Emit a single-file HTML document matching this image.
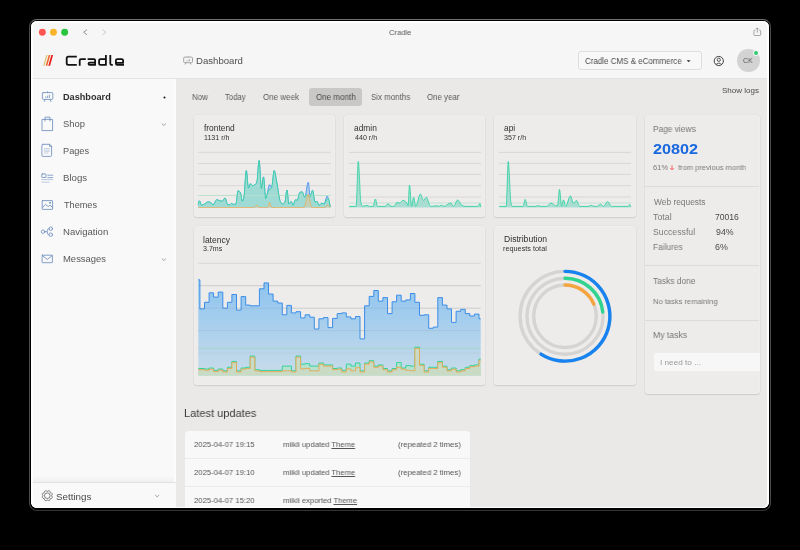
<!DOCTYPE html><html><head><meta charset="utf-8"><style>
html,body{margin:0;padding:0;width:800px;height:550px;overflow:hidden;background:#000;}
*{box-sizing:border-box;}
body{font-family:"Liberation Sans",sans-serif;position:relative;}
.t{position:absolute;line-height:1;white-space:pre;will-change:transform;}
.abs{position:absolute;}
.ring{position:absolute;left:29px;top:19px;width:742px;height:492px;border:1px solid #4a4a4a;border-top-color:#707070;border-bottom-color:#333;border-radius:8px;}
.hl{position:absolute;left:31px;top:21px;width:738px;height:487px;border:2px solid rgba(255,255,255,0.85);border-bottom-width:1.5px;border-radius:6px;}
.win{position:absolute;left:0;top:0;width:800px;height:550px;clip-path:inset(21px 31px 42px 31px round 6px);background:#f6f6f6;}
.card{position:absolute;background:#edeceb;border-radius:3px;box-shadow:0 0 0 0.5px rgba(0,0,0,0.045),0 1px 1.5px rgba(0,0,0,0.1),inset 0 0 0 1px rgba(255,255,255,0.14);}
</style></head><body>
<div class="ring"></div>
<div class="win">
<div class="abs" style="left:31px;top:21px;width:738px;height:58px;background:#f6f6f6"></div><svg class="abs" style="left:0;top:0" width="120" height="50"><circle cx="42.35" cy="32.2" r="3.45" fill="#ff5552"/><circle cx="53.5" cy="32.2" r="3.45" fill="#f8b52c"/><circle cx="64.65" cy="32.2" r="3.45" fill="#2ac441"/></svg><svg class="abs" style="left:0;top:0" width="800" height="80"><polyline points="87,29.6 83.6,32.2 87,34.8" fill="none" stroke="#8a8a8a" stroke-width="0.9"/><polyline points="102.5,29.6 105.9,32.2 102.5,34.8" fill="none" stroke="#c4c4c4" stroke-width="0.9"/><path d="M755.4,30.2 H754.8 Q753.9,30.2 753.9,31.1 V34.6 Q753.9,35.5 754.8,35.5 H759.8 Q760.7,35.5 760.7,34.6 V31.1 Q760.7,30.2 759.8,30.2 H759.2 M757.3,32.6 V27.9 M756,29.2 L757.3,27.9 L758.6,29.2" fill="none" stroke="#8a8a8a" stroke-width="0.75"/></svg><div class="t" style="left:388.51px;top:29px;font-size:8.0px;color:#5a5a5a;font-weight:400;transform:scaleX(0.9565);transform-origin:0 0;">Cradle</div>
<div class="abs" style="left:31px;top:78px;width:738px;height:1px;background:#e3e3e3"></div><svg class="abs" style="left:0;top:0" width="200" height="80"><polygon points="46.3,55 47.5,55 44.5,65.8 43.3,65.8" fill="#d8c46a"/><polygon points="48.7,55 50.3,55 47.3,65.8 45.7,65.8" fill="#f0642a"/><polygon points="51.3,55 53.1,55 50.1,65.8 48.3,65.8" fill="#e8201c"/></svg><svg class="abs" style="left:0;top:0" width="200" height="80"><g fill="none" stroke="#111" stroke-width="1.8" stroke-linejoin="round"><path d="M76.8,56.7 H68.3 Q66.7,56.7 66.7,58.3 V63.3 Q66.7,64.9 68.3,64.9 H76.8"/><path d="M79.7,65.8 V60.5 Q79.7,59.1 81.1,59.1 H85.8"/><path d="M87.6,59.1 H94 Q95.1,59.1 95.1,60.2 V64.9 H89.6 Q88.5,64.9 88.5,63.8 Q88.5,62.7 89.6,62.7 H95.1"/><path d="M105.9,55 V64.9 H100.5 Q99.1,64.9 99.1,63.5 V60.5 Q99.1,59.1 100.5,59.1 H105.9"/><path d="M110.3,55 V63.6 Q110.3,64.9 111.6,64.9 H112.8"/><path d="M124,64.9 H117.3 Q115.9,64.9 115.9,63.5 V60.5 Q115.9,59.1 117.3,59.1 H121.7 Q123.1,59.1 123.1,60.5 V62.9 H115.9"/></g></svg><svg class="abs" style="left:0;top:0" width="260" height="80"><g fill="none" stroke="#8d8d8d" stroke-width="0.8"><rect x="183.7" y="57.1" width="8.8" height="5.6" rx="1"/><path d="M186.1,62.7 l-0.9,1.8 M190.1,62.7 l0.9,1.8 M188.1,57.1 v-0.8 M186.6,61.2 v-0.6 M188.1,61.2 v-1.3 M189.6,61.2 v-2" stroke-width="0.7"/></g></svg><div class="t" style="left:195.75px;top:56px;font-size:9.6px;color:#4f4f4f;font-weight:400;transform:scaleX(0.9945);transform-origin:0 0;">Dashboard</div>
<div class="abs" style="left:578.2px;top:51.2px;width:123.4px;height:18.4px;border:1px solid #dedede;border-radius:3px;background:#f8f8f8"></div><div class="t" style="left:585.29px;top:57px;font-size:8.7px;color:#4a4a4a;font-weight:400;transform:scaleX(0.9187);transform-origin:0 0;">Cradle CMS &amp; eCommerce</div>
<svg class="abs" style="left:0;top:0" width="800" height="80"><polygon points="686.6,60.2 690.6,60.2 688.6,62.2" fill="#333"/><circle cx="718.8" cy="61" r="4.6" fill="none" stroke="#333" stroke-width="0.9"/><circle cx="718.8" cy="59.8" r="1.6" fill="none" stroke="#333" stroke-width="0.8"/><path d="M715.9,64.4 Q718.8,61.6 721.7,64.4" fill="none" stroke="#333" stroke-width="0.8"/></svg><div class="abs" style="left:737px;top:49.2px;width:22.6px;height:22.6px;border-radius:50%;background:#d3d3d3"></div><div class="t" style="left:743.07px;top:57px;font-size:7.5px;color:#555;font-weight:400;transform:scaleX(0.9200);transform-origin:0 0;">CK</div>
<div class="abs" style="left:754.2px;top:50.7px;width:4px;height:4px;border-radius:50%;background:#2ecc71;box-shadow:0 0 0 1px #f6f6f6"></div><div class="abs" style="left:31px;top:79px;width:145px;height:430px;background:#f9f9f9"></div><div class="abs" style="left:31px;top:476px;width:145px;height:6px;background:linear-gradient(#f9f9f9,#f0f0f0)"></div><div class="abs" style="left:174px;top:79px;width:2px;height:403px;background:#fcfcfc"></div><div class="abs" style="left:31px;top:482px;width:145px;height:1px;background:#e2e2e2"></div><div class="t" style="left:63.39px;top:93px;font-size:9.0px;color:#2e2e2e;font-weight:700;transform:scaleX(1.0152);transform-origin:0 0;">Dashboard</div>
<div class="t" style="left:63.28px;top:120px;font-size:9.15px;color:#585858;font-weight:400;transform:scaleX(1.0341);transform-origin:0 0;">Shop</div>
<div class="t" style="left:63.04px;top:147px;font-size:9.15px;color:#585858;font-weight:400;transform:scaleX(1.0080);transform-origin:0 0;">Pages</div>
<div class="t" style="left:63.01px;top:174px;font-size:9.15px;color:#585858;font-weight:400;transform:scaleX(1.0575);transform-origin:0 0;">Blogs</div>
<div class="t" style="left:64.05px;top:201px;font-size:9.15px;color:#585858;font-weight:400;">Themes</div>
<div class="t" style="left:63.01px;top:228px;font-size:9.15px;color:#585858;font-weight:400;transform:scaleX(1.0500);transform-origin:0 0;">Navigation</div>
<div class="t" style="left:63.02px;top:255px;font-size:9.15px;color:#585858;font-weight:400;transform:scaleX(1.0356);transform-origin:0 0;">Messages</div>
<svg class="abs" style="left:0;top:0" width="180" height="520"><g fill="none" stroke="#6f8fbf" stroke-width="0.85" stroke-linejoin="round" stroke-linecap="round"><rect x="42.4" y="92.6" width="10.4" height="6.8" rx="0.8"/><path d="M47.6,92.6 v-1 M45.2,99.4 l-1,2.2 M50,99.4 l1,2.2 M45.8,97.6 v-0.8 M47.6,97.6 v-1.6 M49.4,97.6 v-2.4" stroke-width="0.8"/><path d="M42.4,119.4 H52.6 V130.6 H42.4 Z M45,119.4 V117.2 H50 V119.4 M45,119.4 V121 M50,119.4 V121"/><path d="M42.9,144.3 H49.6 L51.6,146.3 V155.4 Q51.6,156.4 50.6,156.4 H42.9 Q41.9,156.4 41.9,155.4 V145.3 Q41.9,144.3 42.9,144.3 Z M49.6,144.3 V146.3 H51.6"/><path d="M44.4,148.6 H49.4 M44.4,150.1 H49.4 M44.4,151.6 H49.4 M44.4,153.1 H47.8" stroke-width="0.5" opacity="0.7"/><rect x="41.8" y="173.9" width="4.2" height="3.6" rx="0.5"/><path d="M47.8,175.2 H52.8 M47.8,177.6 H52.8" stroke-width="0.8"/><path d="M41.8,179.6 H52.8 M41.8,182.2 H49" stroke-width="0.6" opacity="0.75"/><rect x="42.2" y="200.6" width="10.4" height="8.8" rx="0.4"/><path d="M42.4,207.4 L45.6,204.4 L48.2,206.6 L50,205.2 L52.4,207.2"/><circle cx="50" cy="202.8" r="0.6"/><circle cx="43.1" cy="231.7" r="1.75"/><circle cx="50.8" cy="228.7" r="1.75"/><circle cx="50.8" cy="234.7" r="1.75"/><path d="M44.85,231.7 H46.6 Q47.6,231.7 47.6,230.7 V229.7 Q47.6,228.7 48.6,228.7 H49.05 M46.6,231.7 Q47.6,231.7 47.6,232.7 V233.7 Q47.6,234.7 48.6,234.7 H49.05"/><rect x="42.1" y="255.2" width="10.3" height="7.5" rx="0.4"/><path d="M42.3,255.6 L47.25,259.4 L52.2,255.6"/></g><circle cx="164.5" cy="97.6" r="1" fill="#111"/><g fill="none" stroke="#8a8a8a" stroke-width="0.8"><polyline points="161.8,123.6 163.8,125.5 165.8,123.6"/><polyline points="161.8,258.6 163.8,260.5 165.8,258.6"/><polyline points="155.2,495 157.2,496.9 159.2,495"/></g><g fill="none" stroke="#5e5e5e" stroke-width="0.8"><circle cx="47.3" cy="495.7" r="2.8"/><path d="M47.30,491.40 Q49.83,489.60 50.34,492.66 Q53.40,493.17 51.60,495.70 Q53.40,498.23 50.34,498.74 Q49.83,501.80 47.30,500.00 Q44.77,501.80 44.26,498.74 Q41.20,498.23 43.00,495.70 Q41.20,493.17 44.26,492.66 Q44.77,489.60 47.30,491.40 Z"/></g></svg><div class="t" style="left:56.25px;top:492px;font-size:9.8px;color:#4a4a4a;font-weight:400;">Settings</div>
<div class="abs" style="left:176px;top:79px;width:593px;height:430px;background:#ebe9e8"></div><div class="abs" style="left:308.5px;top:87.8px;width:53.5px;height:17.9px;border-radius:3px;background:#c9c8c7"></div><div class="t" style="left:191.66px;top:93px;font-size:8.7px;color:#5a5a5a;font-weight:400;transform:scaleX(0.9134);transform-origin:0 0;">Now</div>
<div class="t" style="left:225.18px;top:93px;font-size:8.7px;color:#5a5a5a;font-weight:400;transform:scaleX(0.8870);transform-origin:0 0;">Today</div>
<div class="t" style="left:262.77px;top:93px;font-size:8.7px;color:#5a5a5a;font-weight:400;transform:scaleX(0.9231);transform-origin:0 0;">One week</div>
<div class="t" style="left:315.77px;top:93px;font-size:8.7px;color:#4a4a4a;font-weight:400;transform:scaleX(0.9231);transform-origin:0 0;">One month</div>
<div class="t" style="left:371.24px;top:93px;font-size:8.7px;color:#5a5a5a;font-weight:400;transform:scaleX(0.9112);transform-origin:0 0;">Six months</div>
<div class="t" style="left:427.47px;top:93px;font-size:8.7px;color:#5a5a5a;font-weight:400;transform:scaleX(0.9099);transform-origin:0 0;">One year</div>
<div class="t" style="left:722.20px;top:87px;font-size:8.0px;color:#4a4a4a;font-weight:400;transform:scaleX(0.9931);transform-origin:0 0;">Show logs</div>
<div class="card" style="left:193.5px;top:114.5px;width:141.9px;height:102.5px"></div><div class="card" style="left:343.5px;top:114.5px;width:141.5px;height:102.5px"></div><div class="card" style="left:494px;top:114.5px;width:141.5px;height:102.5px"></div><div class="card" style="left:644.5px;top:114.5px;width:115px;height:279.2px"></div><div class="card" style="left:193.5px;top:226px;width:291.5px;height:159.4px"></div><div class="card" style="left:494px;top:226px;width:141.5px;height:159.2px"></div><div class="t" style="left:204.00px;top:124px;font-size:8.4px;color:#303030;font-weight:400;">frontend</div>
<div class="t" style="left:204.00px;top:135px;font-size:7.1px;color:#333;font-weight:400;">1131 r/h</div>
<div class="t" style="left:354.15px;top:124px;font-size:8.4px;color:#303030;font-weight:400;">admin</div>
<div class="t" style="left:354.90px;top:135px;font-size:7.1px;color:#333;font-weight:400;">440 r/h</div>
<div class="t" style="left:503.75px;top:124px;font-size:8.4px;color:#303030;font-weight:400;">api</div>
<div class="t" style="left:504.25px;top:135px;font-size:7.1px;color:#333;font-weight:400;">357 r/h</div>
<svg class="abs" style="left:0;top:0" width="800" height="550">
<defs><linearGradient id="lg" x1="0" y1="0" x2="0" y2="1"><stop offset="0" stop-color="#8cc3ef"/><stop offset="1" stop-color="#c8dcea"/></linearGradient></defs>
<line x1="198.3" y1="152.3" x2="330.7" y2="152.3" stroke="#d6d5d4" stroke-width="0.9"/>
<line x1="198.3" y1="163.5" x2="330.7" y2="163.5" stroke="#d6d5d4" stroke-width="0.9"/>
<line x1="198.3" y1="174.4" x2="330.7" y2="174.4" stroke="#d6d5d4" stroke-width="0.9"/>
<line x1="198.3" y1="185.6" x2="330.7" y2="185.6" stroke="#d6d5d4" stroke-width="0.9"/>
<line x1="349" y1="152.4" x2="481" y2="152.4" stroke="#d6d5d4" stroke-width="0.9"/>
<line x1="349" y1="163.4" x2="481" y2="163.4" stroke="#d6d5d4" stroke-width="0.9"/>
<line x1="349" y1="174.4" x2="481" y2="174.4" stroke="#d6d5d4" stroke-width="0.9"/>
<line x1="349" y1="185.6" x2="481" y2="185.6" stroke="#d6d5d4" stroke-width="0.9"/>
<line x1="349" y1="197" x2="481" y2="197" stroke="#d6d5d4" stroke-width="0.9"/>
<line x1="499" y1="152.4" x2="631" y2="152.4" stroke="#d6d5d4" stroke-width="0.9"/>
<line x1="499" y1="163.4" x2="631" y2="163.4" stroke="#d6d5d4" stroke-width="0.9"/>
<line x1="499" y1="174.4" x2="631" y2="174.4" stroke="#d6d5d4" stroke-width="0.9"/>
<line x1="499" y1="185.6" x2="631" y2="185.6" stroke="#d6d5d4" stroke-width="0.9"/>
<line x1="499" y1="197" x2="631" y2="197" stroke="#d6d5d4" stroke-width="0.9"/>
<path d="M198.20,204.70 C198.60,203.40 199.00,200.80 199.40,200.80 C200.10,200.80 200.80,205.30 201.50,205.30 C202.50,205.30 203.50,204.49 204.50,204.00 C205.73,203.39 206.97,201.90 208.20,201.90 C209.20,201.90 210.20,202.23 211.20,202.90 C211.80,203.30 212.40,205.00 213.00,205.00 C214.23,205.00 215.47,199.80 216.70,199.80 C217.73,199.80 218.77,200.53 219.80,200.80 C220.60,201.01 221.40,201.30 222.20,201.30 C223.13,201.30 224.07,198.00 225.00,198.00 C225.90,198.00 226.80,204.40 227.70,204.70 C228.30,204.90 228.90,205.00 229.50,205.00 C230.10,205.00 230.70,203.50 231.30,203.50 C231.90,203.50 232.50,204.40 233.10,204.40 C234.07,204.40 235.03,204.27 236.00,204.00 C236.67,203.82 237.33,190.70 238.00,190.70 C238.83,190.70 239.67,191.50 240.50,193.10 C241.10,194.25 241.70,201.30 242.30,201.30 C242.90,201.30 243.50,199.60 244.10,196.20 C244.83,192.04 245.57,170.60 246.30,170.60 C247.00,170.60 247.70,188.20 248.40,188.20 C249.13,188.20 249.87,183.70 250.60,183.70 C251.27,183.70 251.93,185.80 252.60,185.80 C253.63,185.80 254.67,185.20 255.70,184.00 C256.10,183.54 256.50,183.40 256.90,182.20 C257.63,180.00 258.37,160.60 259.10,160.60 C259.87,160.60 260.63,188.80 261.40,188.80 C262.10,188.80 262.80,176.90 263.50,176.90 C264.23,176.90 264.97,198.60 265.70,198.60 C267.00,198.60 268.30,184.60 269.60,184.60 C270.30,184.60 271.00,187.60 271.70,187.60 C272.53,187.60 273.37,170.60 274.20,170.60 C275.00,170.60 275.80,177.59 276.60,181.50 C277.83,187.53 279.07,199.13 280.30,201.60 C281.10,203.20 281.90,204.00 282.70,204.00 C283.43,204.00 284.17,203.40 284.90,202.20 C285.60,201.05 286.30,190.00 287.00,190.00 C287.60,190.00 288.20,204.00 288.80,204.00 C289.60,204.00 290.40,201.60 291.20,201.60 C291.83,201.60 292.47,205.30 293.10,205.30 C293.90,205.30 294.70,199.80 295.50,199.80 C296.10,199.80 296.70,200.40 297.30,200.40 C298.13,200.40 298.97,192.92 299.80,192.50 C300.60,192.10 301.40,191.90 302.20,191.90 C303.00,191.90 303.80,197.40 304.60,197.40 C305.83,197.40 307.07,182.20 308.30,182.20 C308.90,182.20 309.50,196.80 310.10,196.80 C310.90,196.80 311.70,190.30 312.50,190.30 C313.33,190.30 314.17,202.20 315.00,202.20 C315.60,202.20 316.20,201.30 316.80,201.30 C317.60,201.30 318.40,205.30 319.20,205.30 C320.03,205.30 320.87,203.20 321.70,203.20 C322.50,203.20 323.30,204.00 324.10,204.00 C325.13,204.00 326.17,196.00 327.20,196.00 C327.60,196.00 328.00,197.33 328.40,198.60 C329.00,200.50 329.60,204.20 330.20,207.00 L330.20,207.6 L198.20,207.6 Z" fill="#a9cfe6" opacity="0.9"/>
<path d="M198.20,204.70 C198.60,203.40 199.00,200.80 199.40,200.80 C200.10,200.80 200.80,205.30 201.50,205.30 C202.50,205.30 203.50,204.49 204.50,204.00 C205.73,203.39 206.97,201.90 208.20,201.90 C209.20,201.90 210.20,202.23 211.20,202.90 C211.80,203.30 212.40,205.00 213.00,205.00 C214.23,205.00 215.47,199.80 216.70,199.80 C217.73,199.80 218.77,200.53 219.80,200.80 C220.60,201.01 221.40,201.30 222.20,201.30 C223.13,201.30 224.07,198.00 225.00,198.00 C225.90,198.00 226.80,204.40 227.70,204.70 C228.30,204.90 228.90,205.00 229.50,205.00 C230.10,205.00 230.70,203.50 231.30,203.50 C231.90,203.50 232.50,204.40 233.10,204.40 C234.07,204.40 235.03,204.27 236.00,204.00 C236.67,203.82 237.33,190.70 238.00,190.70 C238.83,190.70 239.67,191.50 240.50,193.10 C241.10,194.25 241.70,201.30 242.30,201.30 C242.90,201.30 243.50,199.60 244.10,196.20 C244.83,192.04 245.57,170.60 246.30,170.60 C247.00,170.60 247.70,188.20 248.40,188.20 C249.13,188.20 249.87,183.70 250.60,183.70 C251.27,183.70 251.93,185.80 252.60,185.80 C253.63,185.80 254.67,185.20 255.70,184.00 C256.10,183.54 256.50,183.40 256.90,182.20 C257.63,180.00 258.37,160.60 259.10,160.60 C259.87,160.60 260.63,188.80 261.40,188.80 C262.10,188.80 262.80,176.90 263.50,176.90 C264.23,176.90 264.97,198.60 265.70,198.60 C267.00,198.60 268.30,184.60 269.60,184.60 C270.30,184.60 271.00,187.60 271.70,187.60 C272.53,187.60 273.37,170.60 274.20,170.60 C275.00,170.60 275.80,177.59 276.60,181.50 C277.83,187.53 279.07,199.13 280.30,201.60 C281.10,203.20 281.90,204.00 282.70,204.00 C283.43,204.00 284.17,203.40 284.90,202.20 C285.60,201.05 286.30,190.00 287.00,190.00 C287.60,190.00 288.20,204.00 288.80,204.00 C289.60,204.00 290.40,201.60 291.20,201.60 C291.83,201.60 292.47,205.30 293.10,205.30 C293.90,205.30 294.70,199.80 295.50,199.80 C296.10,199.80 296.70,200.40 297.30,200.40 C298.13,200.40 298.97,192.92 299.80,192.50 C300.60,192.10 301.40,191.90 302.20,191.90 C303.00,191.90 303.80,197.40 304.60,197.40 C305.83,197.40 307.07,182.20 308.30,182.20 C308.90,182.20 309.50,196.80 310.10,196.80 C310.90,196.80 311.70,190.30 312.50,190.30 C313.33,190.30 314.17,202.20 315.00,202.20 C315.60,202.20 316.20,201.30 316.80,201.30 C317.60,201.30 318.40,205.30 319.20,205.30 C320.03,205.30 320.87,203.20 321.70,203.20 C322.50,203.20 323.30,204.00 324.10,204.00 C325.13,204.00 326.17,196.00 327.20,196.00 C327.60,196.00 328.00,197.33 328.40,198.60 C329.00,200.50 329.60,204.20 330.20,207.00" fill="none" stroke="#4a8ef0" stroke-width="0.9"/>
<path d="M198.20,204.70 C198.60,203.40 199.00,200.80 199.40,200.80 C200.10,200.80 200.80,205.30 201.50,205.30 C202.50,205.30 203.50,204.49 204.50,204.00 C205.73,203.39 206.97,201.90 208.20,201.90 C209.20,201.90 210.20,202.23 211.20,202.90 C211.80,203.30 212.40,205.00 213.00,205.00 C214.23,205.00 215.47,199.80 216.70,199.80 C217.73,199.80 218.77,200.53 219.80,200.80 C220.60,201.01 221.40,201.30 222.20,201.30 C223.13,201.30 224.07,198.00 225.00,198.00 C225.90,198.00 226.80,204.40 227.70,204.70 C228.30,204.90 228.90,205.00 229.50,205.00 C230.10,205.00 230.70,203.50 231.30,203.50 C231.90,203.50 232.50,204.40 233.10,204.40 C234.07,204.40 235.03,204.27 236.00,204.00 C236.67,203.82 237.33,190.70 238.00,190.70 C238.83,190.70 239.67,191.50 240.50,193.10 C241.10,194.25 241.70,201.30 242.30,201.30 C242.90,201.30 243.50,199.60 244.10,196.20 C244.83,192.04 245.57,170.60 246.30,170.60 C247.00,170.60 247.70,188.20 248.40,188.20 C249.13,188.20 249.87,183.70 250.60,183.70 C251.27,183.70 251.93,185.80 252.60,185.80 C253.63,185.80 254.67,185.20 255.70,184.00 C256.10,183.54 256.50,183.40 256.90,182.20 C257.63,180.00 258.37,160.60 259.10,160.60 C259.87,160.60 260.63,188.80 261.40,188.80 C262.10,188.80 262.80,176.90 263.50,176.90 C264.23,176.90 264.97,198.60 265.70,198.60 C266.50,198.60 267.30,192.94 268.10,191.30 C269.30,188.83 270.50,190.07 271.70,187.60 C272.53,185.89 273.37,170.60 274.20,170.60 C275.00,170.60 275.80,177.59 276.60,181.50 C277.83,187.53 279.07,199.13 280.30,201.60 C281.10,203.20 281.90,204.00 282.70,204.00 C283.43,204.00 284.17,203.40 284.90,202.20 C285.60,201.05 286.30,190.00 287.00,190.00 C287.60,190.00 288.20,204.00 288.80,204.00 C289.60,204.00 290.40,201.60 291.20,201.60 C291.83,201.60 292.47,205.30 293.10,205.30 C293.90,205.30 294.70,199.80 295.50,199.80 C296.10,199.80 296.70,200.40 297.30,200.40 C298.13,200.40 298.97,192.92 299.80,192.50 C300.60,192.10 301.40,191.90 302.20,191.90 C303.00,191.90 303.80,197.40 304.60,197.40 C305.23,197.40 305.87,195.00 306.50,195.00 C307.70,195.00 308.90,196.80 310.10,196.80 C310.90,196.80 311.70,190.30 312.50,190.30 C313.33,190.30 314.17,202.20 315.00,202.20 C315.60,202.20 316.20,201.30 316.80,201.30 C317.60,201.30 318.40,205.30 319.20,205.30 C320.03,205.30 320.87,203.20 321.70,203.20 C322.50,203.20 323.30,204.00 324.10,204.00 C324.93,204.00 325.77,200.71 326.60,199.80 C327.20,199.15 327.80,198.60 328.40,198.60 C329.00,198.60 329.60,204.20 330.20,207.00 L330.20,207.6 L198.20,207.6 Z" fill="#9fdad5"/>
<line x1="198.3" y1="195.5" x2="330.7" y2="195.5" stroke="#b5e0c8" stroke-width="0.9"/>
<path d="M198.20,204.70 C198.60,203.40 199.00,200.80 199.40,200.80 C200.10,200.80 200.80,205.30 201.50,205.30 C202.50,205.30 203.50,204.49 204.50,204.00 C205.73,203.39 206.97,201.90 208.20,201.90 C209.20,201.90 210.20,202.23 211.20,202.90 C211.80,203.30 212.40,205.00 213.00,205.00 C214.23,205.00 215.47,199.80 216.70,199.80 C217.73,199.80 218.77,200.53 219.80,200.80 C220.60,201.01 221.40,201.30 222.20,201.30 C223.13,201.30 224.07,198.00 225.00,198.00 C225.90,198.00 226.80,204.40 227.70,204.70 C228.30,204.90 228.90,205.00 229.50,205.00 C230.10,205.00 230.70,203.50 231.30,203.50 C231.90,203.50 232.50,204.40 233.10,204.40 C234.07,204.40 235.03,204.27 236.00,204.00 C236.67,203.82 237.33,190.70 238.00,190.70 C238.83,190.70 239.67,191.50 240.50,193.10 C241.10,194.25 241.70,201.30 242.30,201.30 C242.90,201.30 243.50,199.60 244.10,196.20 C244.83,192.04 245.57,170.60 246.30,170.60 C247.00,170.60 247.70,188.20 248.40,188.20 C249.13,188.20 249.87,183.70 250.60,183.70 C251.27,183.70 251.93,185.80 252.60,185.80 C253.63,185.80 254.67,185.20 255.70,184.00 C256.10,183.54 256.50,183.40 256.90,182.20 C257.63,180.00 258.37,160.60 259.10,160.60 C259.87,160.60 260.63,188.80 261.40,188.80 C262.10,188.80 262.80,176.90 263.50,176.90 C264.23,176.90 264.97,198.60 265.70,198.60 C266.50,198.60 267.30,192.94 268.10,191.30 C269.30,188.83 270.50,190.07 271.70,187.60 C272.53,185.89 273.37,170.60 274.20,170.60 C275.00,170.60 275.80,177.59 276.60,181.50 C277.83,187.53 279.07,199.13 280.30,201.60 C281.10,203.20 281.90,204.00 282.70,204.00 C283.43,204.00 284.17,203.40 284.90,202.20 C285.60,201.05 286.30,190.00 287.00,190.00 C287.60,190.00 288.20,204.00 288.80,204.00 C289.60,204.00 290.40,201.60 291.20,201.60 C291.83,201.60 292.47,205.30 293.10,205.30 C293.90,205.30 294.70,199.80 295.50,199.80 C296.10,199.80 296.70,200.40 297.30,200.40 C298.13,200.40 298.97,192.92 299.80,192.50 C300.60,192.10 301.40,191.90 302.20,191.90 C303.00,191.90 303.80,197.40 304.60,197.40 C305.23,197.40 305.87,195.00 306.50,195.00 C307.70,195.00 308.90,196.80 310.10,196.80 C310.90,196.80 311.70,190.30 312.50,190.30 C313.33,190.30 314.17,202.20 315.00,202.20 C315.60,202.20 316.20,201.30 316.80,201.30 C317.60,201.30 318.40,205.30 319.20,205.30 C320.03,205.30 320.87,203.20 321.70,203.20 C322.50,203.20 323.30,204.00 324.10,204.00 C324.93,204.00 325.77,200.71 326.60,199.80 C327.20,199.15 327.80,198.60 328.40,198.60 C329.00,198.60 329.60,204.20 330.20,207.00" fill="none" stroke="#33d2a1" stroke-width="0.9"/>
<path d="M198.20,207.50 C216.80,207.50 235.40,207.50 254.00,207.50 C254.97,207.50 255.93,205.00 256.90,205.00 C257.43,205.00 257.97,207.50 258.50,207.50 C261.50,207.50 264.50,207.50 267.50,207.50 C268.20,207.50 268.90,202.20 269.60,202.20 C270.23,202.20 270.87,207.50 271.50,207.50 C282.33,207.50 293.17,207.50 304.00,207.50 C305.43,207.50 306.87,194.30 308.30,194.30 C309.37,194.30 310.43,207.50 311.50,207.50 C316.00,207.50 320.50,207.50 325.00,207.50 C325.93,207.50 326.87,204.70 327.80,204.70 C328.60,204.70 329.40,206.57 330.20,207.50 L330.20,207.6 L198.20,207.6 Z" fill="#e8c99a" fill-opacity="0.5" stroke="none"/>
<path d="M198.20,207.50 C216.80,207.50 235.40,207.50 254.00,207.50 C254.97,207.50 255.93,205.00 256.90,205.00 C257.43,205.00 257.97,207.50 258.50,207.50 C261.50,207.50 264.50,207.50 267.50,207.50 C268.20,207.50 268.90,202.20 269.60,202.20 C270.23,202.20 270.87,207.50 271.50,207.50 C282.33,207.50 293.17,207.50 304.00,207.50 C305.43,207.50 306.87,194.30 308.30,194.30 C309.37,194.30 310.43,207.50 311.50,207.50 C316.00,207.50 320.50,207.50 325.00,207.50 C325.93,207.50 326.87,204.70 327.80,204.70 C328.60,204.70 329.40,206.57 330.20,207.50" fill="none" stroke="#f2a54a" stroke-width="0.9" opacity="0.75"/>
<path d="M349.15,206.40 C351.48,206.40 353.82,206.40 356.15,206.40 C356.85,206.40 357.55,161.40 358.25,161.40 C359.13,161.40 360.02,198.45 360.90,202.50 C361.47,205.10 362.03,206.40 362.60,206.40 C363.95,206.40 365.30,205.30 366.65,205.30 C367.63,205.30 368.62,206.40 369.60,206.40 C370.77,206.40 371.93,206.40 373.10,206.40 C373.87,206.40 374.63,199.00 375.40,199.00 C376.10,199.00 376.80,206.40 377.50,206.40 C380.13,206.40 382.77,206.40 385.40,206.40 C386.27,206.40 387.13,203.70 388.00,203.70 C388.87,203.70 389.73,205.80 390.60,206.00 C391.77,206.27 392.93,206.40 394.10,206.40 C394.98,206.40 395.87,202.50 396.75,202.50 C397.63,202.50 398.52,203.00 399.40,203.00 C400.57,203.00 401.73,200.40 402.90,200.40 C404.07,200.40 405.23,201.00 406.40,202.20 C406.97,202.78 407.53,205.70 408.10,205.70 C408.57,205.70 409.03,185.00 409.50,185.00 C410.20,185.00 410.90,206.40 411.60,206.40 C412.30,206.40 413.00,197.25 413.70,197.25 C414.35,197.25 415.00,206.40 415.65,206.40 C417.23,206.40 418.82,194.10 420.40,194.10 C421.43,194.10 422.47,200.40 423.50,200.40 C424.50,200.40 425.50,197.25 426.50,197.25 C427.55,197.25 428.60,203.80 429.65,205.10 C430.35,205.97 431.05,206.40 431.75,206.40 C433.50,206.40 435.25,205.70 437.00,205.70 C437.58,205.70 438.17,206.40 438.75,206.40 C439.63,206.40 440.52,205.10 441.40,205.10 C442.27,205.10 443.13,206.40 444.00,206.40 C446.22,206.40 448.43,203.00 450.65,203.00 C451.63,203.00 452.62,206.40 453.60,206.40 C454.95,206.40 456.30,199.90 457.65,199.90 C458.93,199.90 460.22,204.34 461.50,205.10 C462.97,205.97 464.43,206.40 465.90,206.40 C469.97,206.40 474.03,206.40 478.10,206.40 C478.70,206.40 479.30,203.40 479.90,203.40 C480.18,203.40 480.47,205.73 480.75,206.90 L480.75,207.6 L349.15,207.6 Z" fill="#a9ddd4"/>
<line x1="349.15" y1="203" x2="480.75" y2="203" stroke="#a8dcc4" stroke-width="0.6"/>
<path d="M349.15,206.40 C351.48,206.40 353.82,206.40 356.15,206.40 C356.85,206.40 357.55,161.40 358.25,161.40 C359.13,161.40 360.02,198.45 360.90,202.50 C361.47,205.10 362.03,206.40 362.60,206.40 C363.95,206.40 365.30,205.30 366.65,205.30 C367.63,205.30 368.62,206.40 369.60,206.40 C370.77,206.40 371.93,206.40 373.10,206.40 C373.87,206.40 374.63,199.00 375.40,199.00 C376.10,199.00 376.80,206.40 377.50,206.40 C380.13,206.40 382.77,206.40 385.40,206.40 C386.27,206.40 387.13,203.70 388.00,203.70 C388.87,203.70 389.73,205.80 390.60,206.00 C391.77,206.27 392.93,206.40 394.10,206.40 C394.98,206.40 395.87,202.50 396.75,202.50 C397.63,202.50 398.52,203.00 399.40,203.00 C400.57,203.00 401.73,200.40 402.90,200.40 C404.07,200.40 405.23,201.00 406.40,202.20 C406.97,202.78 407.53,205.70 408.10,205.70 C408.57,205.70 409.03,185.00 409.50,185.00 C410.20,185.00 410.90,206.40 411.60,206.40 C412.30,206.40 413.00,197.25 413.70,197.25 C414.35,197.25 415.00,206.40 415.65,206.40 C417.23,206.40 418.82,194.10 420.40,194.10 C421.43,194.10 422.47,200.40 423.50,200.40 C424.50,200.40 425.50,197.25 426.50,197.25 C427.55,197.25 428.60,203.80 429.65,205.10 C430.35,205.97 431.05,206.40 431.75,206.40 C433.50,206.40 435.25,205.70 437.00,205.70 C437.58,205.70 438.17,206.40 438.75,206.40 C439.63,206.40 440.52,205.10 441.40,205.10 C442.27,205.10 443.13,206.40 444.00,206.40 C446.22,206.40 448.43,203.00 450.65,203.00 C451.63,203.00 452.62,206.40 453.60,206.40 C454.95,206.40 456.30,199.90 457.65,199.90 C458.93,199.90 460.22,204.34 461.50,205.10 C462.97,205.97 464.43,206.40 465.90,206.40 C469.97,206.40 474.03,206.40 478.10,206.40 C478.70,206.40 479.30,203.40 479.90,203.40 C480.18,203.40 480.47,205.73 480.75,206.90" fill="none" stroke="#33d2a1" stroke-width="0.9"/>
<path d="M499.20,206.40 C501.53,206.40 503.87,206.40 506.20,206.40 C506.88,206.40 507.57,161.40 508.25,161.40 C509.13,161.40 510.02,198.45 510.90,202.50 C511.47,205.10 512.03,206.40 512.60,206.40 C516.10,206.40 519.60,206.40 523.10,206.40 C523.80,206.40 524.50,199.40 525.20,199.40 C525.97,199.40 526.73,206.40 527.50,206.40 C530.00,206.40 532.50,206.40 535.00,206.40 C536.00,206.40 537.00,205.70 538.00,205.70 C539.00,205.70 540.00,206.40 541.00,206.40 C542.92,206.40 544.83,206.40 546.75,206.40 C548.20,206.40 549.65,203.00 551.10,203.00 C552.57,203.00 554.03,205.70 555.50,205.70 C556.20,205.70 556.90,205.70 557.60,205.70 C558.23,205.70 558.87,189.40 559.50,189.40 C560.20,189.40 560.90,206.40 561.60,206.40 C562.25,206.40 562.90,199.90 563.55,199.90 C564.25,199.90 564.95,206.40 565.65,206.40 C567.23,206.40 568.82,195.85 570.40,195.85 C571.43,195.85 572.47,203.40 573.50,203.40 C574.50,203.40 575.50,200.40 576.50,200.40 C577.55,200.40 578.60,206.40 579.65,206.40 C582.43,206.40 585.22,206.40 588.00,206.40 C589.13,206.40 590.27,205.30 591.40,205.30 C592.27,205.30 593.13,206.40 594.00,206.40 C594.87,206.40 595.73,206.40 596.60,206.40 C597.97,206.40 599.33,204.30 600.70,204.30 C601.67,204.30 602.63,206.40 603.60,206.40 C604.95,206.40 606.30,201.60 607.65,201.60 C608.93,201.60 610.22,206.40 611.50,206.40 C617.03,206.40 622.57,206.40 628.10,206.40 C628.70,206.40 629.30,204.50 629.90,204.50 C630.18,204.50 630.47,206.10 630.75,206.90 L630.75,207.6 L499.20,207.6 Z" fill="#a9ddd4"/>
<line x1="499.2" y1="203" x2="630.75" y2="203" stroke="#a8dcc4" stroke-width="0.6"/>
<path d="M499.20,206.40 C501.53,206.40 503.87,206.40 506.20,206.40 C506.88,206.40 507.57,161.40 508.25,161.40 C509.13,161.40 510.02,198.45 510.90,202.50 C511.47,205.10 512.03,206.40 512.60,206.40 C516.10,206.40 519.60,206.40 523.10,206.40 C523.80,206.40 524.50,199.40 525.20,199.40 C525.97,199.40 526.73,206.40 527.50,206.40 C530.00,206.40 532.50,206.40 535.00,206.40 C536.00,206.40 537.00,205.70 538.00,205.70 C539.00,205.70 540.00,206.40 541.00,206.40 C542.92,206.40 544.83,206.40 546.75,206.40 C548.20,206.40 549.65,203.00 551.10,203.00 C552.57,203.00 554.03,205.70 555.50,205.70 C556.20,205.70 556.90,205.70 557.60,205.70 C558.23,205.70 558.87,189.40 559.50,189.40 C560.20,189.40 560.90,206.40 561.60,206.40 C562.25,206.40 562.90,199.90 563.55,199.90 C564.25,199.90 564.95,206.40 565.65,206.40 C567.23,206.40 568.82,195.85 570.40,195.85 C571.43,195.85 572.47,203.40 573.50,203.40 C574.50,203.40 575.50,200.40 576.50,200.40 C577.55,200.40 578.60,206.40 579.65,206.40 C582.43,206.40 585.22,206.40 588.00,206.40 C589.13,206.40 590.27,205.30 591.40,205.30 C592.27,205.30 593.13,206.40 594.00,206.40 C594.87,206.40 595.73,206.40 596.60,206.40 C597.97,206.40 599.33,204.30 600.70,204.30 C601.67,204.30 602.63,206.40 603.60,206.40 C604.95,206.40 606.30,201.60 607.65,201.60 C608.93,201.60 610.22,206.40 611.50,206.40 C617.03,206.40 622.57,206.40 628.10,206.40 C628.70,206.40 629.30,204.50 629.90,204.50 C630.18,204.50 630.47,206.10 630.75,206.90" fill="none" stroke="#33d2a1" stroke-width="0.9"/>
<line x1="198.3" y1="263.3" x2="480.7" y2="263.3" stroke="#d6d5d4" stroke-width="0.9"/>
<line x1="198.3" y1="285.7" x2="480.7" y2="285.7" stroke="#d6d5d4" stroke-width="0.9"/>
<line x1="198.3" y1="308.2" x2="480.7" y2="308.2" stroke="#d6d5d4" stroke-width="0.9"/>
<line x1="198.3" y1="330.6" x2="480.7" y2="330.6" stroke="#d6d5d4" stroke-width="0.9"/>
<line x1="198.3" y1="353.1" x2="480.7" y2="353.1" stroke="#d6d5d4" stroke-width="0.9"/>
<polygon points="198.3,375.6 198.3,279.8 199.9,279.8 199.9,308.9 204.5,308.9 204.5,302.3 209.1,302.3 209.1,292.8 213.6,292.8 213.6,297.1 218.2,297.1 218.2,292.1 222.8,292.1 222.8,308.2 227.4,308.2 227.4,302.3 231.9,302.3 231.9,294.5 236.5,294.5 236.5,310.1 241.1,310.1 241.1,296.6 245.7,296.6 245.7,305.1 250.2,305.1 250.2,305.8 254.8,305.8 254.8,305.8 259.4,305.8 259.4,288.8 264.0,288.8 264.0,282.9 268.5,282.9 268.5,294.0 273.1,294.0 273.1,301.1 277.7,301.1 277.7,303.0 282.3,303.0 282.3,314.8 286.8,314.8 286.8,305.4 291.4,305.4 291.4,312.9 296.0,312.9 296.0,311.7 300.6,311.7 300.6,317.9 305.1,317.9 305.1,314.8 309.7,314.8 309.7,317.2 314.3,317.2 314.3,329.0 318.9,329.0 318.9,318.8 323.4,318.8 323.4,317.6 328.0,317.6 328.0,327.6 332.6,327.6 332.6,318.4 337.2,318.4 337.2,313.6 341.7,313.6 341.7,312.9 346.3,312.9 346.3,316.9 350.9,316.9 350.9,318.8 355.5,318.8 355.5,316.5 360.0,316.5 360.0,338.9 364.6,338.9 364.6,305.8 369.2,305.8 369.2,296.4 373.8,296.4 373.8,290.5 378.3,290.5 378.3,301.1 382.9,301.1 382.9,297.6 387.5,297.6 387.5,313.6 392.1,313.6 392.1,301.8 396.6,301.8 396.6,295.2 401.2,295.2 401.2,301.1 405.8,301.1 405.8,299.9 410.4,299.9 410.4,293.5 414.9,293.5 414.9,302.3 419.5,302.3 419.5,315.3 424.1,315.3 424.1,314.8 428.7,314.8 428.7,328.3 433.2,328.3 433.2,327.1 437.8,327.1 437.8,297.6 442.4,297.6 442.4,305.1 447.0,305.1 447.0,308.9 451.5,308.9 451.5,322.4 456.1,322.4 456.1,311.3 460.7,311.3 460.7,309.4 465.3,309.4 465.3,313.6 469.8,313.6 469.8,316.0 474.4,316.0 474.4,314.1 479.0,314.1 479.0,318.8 480.7,318.8 480.7,375.6" fill="url(#lg)"/>
<polyline points="198.3,279.8 199.9,279.8 199.9,308.9 204.5,308.9 204.5,302.3 209.1,302.3 209.1,292.8 213.6,292.8 213.6,297.1 218.2,297.1 218.2,292.1 222.8,292.1 222.8,308.2 227.4,308.2 227.4,302.3 231.9,302.3 231.9,294.5 236.5,294.5 236.5,310.1 241.1,310.1 241.1,296.6 245.7,296.6 245.7,305.1 250.2,305.1 250.2,305.8 254.8,305.8 254.8,305.8 259.4,305.8 259.4,288.8 264.0,288.8 264.0,282.9 268.5,282.9 268.5,294.0 273.1,294.0 273.1,301.1 277.7,301.1 277.7,303.0 282.3,303.0 282.3,314.8 286.8,314.8 286.8,305.4 291.4,305.4 291.4,312.9 296.0,312.9 296.0,311.7 300.6,311.7 300.6,317.9 305.1,317.9 305.1,314.8 309.7,314.8 309.7,317.2 314.3,317.2 314.3,329.0 318.9,329.0 318.9,318.8 323.4,318.8 323.4,317.6 328.0,317.6 328.0,327.6 332.6,327.6 332.6,318.4 337.2,318.4 337.2,313.6 341.7,313.6 341.7,312.9 346.3,312.9 346.3,316.9 350.9,316.9 350.9,318.8 355.5,318.8 355.5,316.5 360.0,316.5 360.0,338.9 364.6,338.9 364.6,305.8 369.2,305.8 369.2,296.4 373.8,296.4 373.8,290.5 378.3,290.5 378.3,301.1 382.9,301.1 382.9,297.6 387.5,297.6 387.5,313.6 392.1,313.6 392.1,301.8 396.6,301.8 396.6,295.2 401.2,295.2 401.2,301.1 405.8,301.1 405.8,299.9 410.4,299.9 410.4,293.5 414.9,293.5 414.9,302.3 419.5,302.3 419.5,315.3 424.1,315.3 424.1,314.8 428.7,314.8 428.7,328.3 433.2,328.3 433.2,327.1 437.8,327.1 437.8,297.6 442.4,297.6 442.4,305.1 447.0,305.1 447.0,308.9 451.5,308.9 451.5,322.4 456.1,322.4 456.1,311.3 460.7,311.3 460.7,309.4 465.3,309.4 465.3,313.6 469.8,313.6 469.8,316.0 474.4,316.0 474.4,314.1 479.0,314.1 479.0,318.8 480.7,318.8" fill="none" stroke="#3b8ee8" stroke-width="1"/>
<line x1="198.3" y1="348.4" x2="480.7" y2="348.4" stroke="#9fd4c8" stroke-width="0.8"/>
<line x1="198.3" y1="353.1" x2="480.7" y2="353.1" stroke="#b9cfdc" stroke-width="0.8"/>
<line x1="198.3" y1="285.7" x2="480.7" y2="285.7" stroke="rgba(90,110,130,0.12)" stroke-width="0.9"/>
<line x1="198.3" y1="308.2" x2="480.7" y2="308.2" stroke="rgba(90,110,130,0.12)" stroke-width="0.9"/>
<line x1="198.3" y1="330.6" x2="480.7" y2="330.6" stroke="rgba(90,110,130,0.12)" stroke-width="0.9"/>
<polygon points="198.3,375.6 198.3,368.5 199.9,368.5 199.9,368.5 204.5,368.5 204.5,369.0 209.1,369.0 209.1,368.0 213.6,368.0 213.6,370.4 218.2,370.4 218.2,369.0 222.8,369.0 222.8,370.8 227.4,370.8 227.4,367.3 231.9,367.3 231.9,361.4 236.5,361.4 236.5,370.8 241.1,370.8 241.1,368.0 245.7,368.0 245.7,367.3 250.2,367.3 250.2,356.0 254.8,356.0 254.8,369.7 259.4,369.7 259.4,370.4 264.0,370.4 264.0,370.4 268.5,370.4 268.5,370.4 273.1,370.4 273.1,370.4 277.7,370.4 277.7,370.4 282.3,370.4 282.3,366.1 286.8,366.1 286.8,366.1 291.4,366.1 291.4,370.8 296.0,370.8 296.0,356.0 300.6,356.0 300.6,364.2 305.1,364.2 305.1,363.7 309.7,363.7 309.7,366.1 314.3,366.1 314.3,366.1 318.9,366.1 318.9,363.0 323.4,363.0 323.4,364.9 328.0,364.9 328.0,364.9 332.6,364.9 332.6,368.5 337.2,368.5 337.2,368.0 341.7,368.0 341.7,370.4 346.3,370.4 346.3,364.2 350.9,364.2 350.9,366.1 355.5,366.1 355.5,363.0 360.0,363.0 360.0,370.8 364.6,370.8 364.6,363.0 369.2,363.0 369.2,360.7 373.8,360.7 373.8,366.1 378.3,366.1 378.3,364.9 382.9,364.9 382.9,368.5 387.5,368.5 387.5,370.8 392.1,370.8 392.1,368.5 396.6,368.5 396.6,362.6 401.2,362.6 401.2,368.0 405.8,368.0 405.8,365.6 410.4,365.6 410.4,366.1 414.9,366.1 414.9,347.2 419.5,347.2 419.5,364.2 424.1,364.2 424.1,370.8 428.7,370.8 428.7,367.3 433.2,367.3 433.2,367.3 437.8,367.3 437.8,361.4 442.4,361.4 442.4,366.1 447.0,366.1 447.0,369.7 451.5,369.7 451.5,368.0 456.1,368.0 456.1,370.8 460.7,370.8 460.7,369.7 465.3,369.7 465.3,367.3 469.8,367.3 469.8,365.6 474.4,365.6 474.4,364.9 479.0,364.9 479.0,359.0 480.7,359.0 480.7,375.6" fill="#b4e2cf"/>
<polyline points="198.3,368.5 199.9,368.5 199.9,368.5 204.5,368.5 204.5,369.0 209.1,369.0 209.1,368.0 213.6,368.0 213.6,370.4 218.2,370.4 218.2,369.0 222.8,369.0 222.8,370.8 227.4,370.8 227.4,367.3 231.9,367.3 231.9,361.4 236.5,361.4 236.5,370.8 241.1,370.8 241.1,368.0 245.7,368.0 245.7,367.3 250.2,367.3 250.2,356.0 254.8,356.0 254.8,369.7 259.4,369.7 259.4,370.4 264.0,370.4 264.0,370.4 268.5,370.4 268.5,370.4 273.1,370.4 273.1,370.4 277.7,370.4 277.7,370.4 282.3,370.4 282.3,366.1 286.8,366.1 286.8,366.1 291.4,366.1 291.4,370.8 296.0,370.8 296.0,356.0 300.6,356.0 300.6,364.2 305.1,364.2 305.1,363.7 309.7,363.7 309.7,366.1 314.3,366.1 314.3,366.1 318.9,366.1 318.9,363.0 323.4,363.0 323.4,364.9 328.0,364.9 328.0,364.9 332.6,364.9 332.6,368.5 337.2,368.5 337.2,368.0 341.7,368.0 341.7,370.4 346.3,370.4 346.3,364.2 350.9,364.2 350.9,366.1 355.5,366.1 355.5,363.0 360.0,363.0 360.0,370.8 364.6,370.8 364.6,363.0 369.2,363.0 369.2,360.7 373.8,360.7 373.8,366.1 378.3,366.1 378.3,364.9 382.9,364.9 382.9,368.5 387.5,368.5 387.5,370.8 392.1,370.8 392.1,368.5 396.6,368.5 396.6,362.6 401.2,362.6 401.2,368.0 405.8,368.0 405.8,365.6 410.4,365.6 410.4,366.1 414.9,366.1 414.9,347.2 419.5,347.2 419.5,364.2 424.1,364.2 424.1,370.8 428.7,370.8 428.7,367.3 433.2,367.3 433.2,367.3 437.8,367.3 437.8,361.4 442.4,361.4 442.4,366.1 447.0,366.1 447.0,369.7 451.5,369.7 451.5,368.0 456.1,368.0 456.1,370.8 460.7,370.8 460.7,369.7 465.3,369.7 465.3,367.3 469.8,367.3 469.8,365.6 474.4,365.6 474.4,364.9 479.0,364.9 479.0,359.0 480.7,359.0" fill="none" stroke="#35d39c" stroke-width="1"/>
<polygon points="198.3,375.6 198.3,369.7 199.9,369.7 199.9,369.7 204.5,369.7 204.5,370.2 209.1,370.2 209.1,369.2 213.6,369.2 213.6,371.6 218.2,371.6 218.2,370.2 222.8,370.2 222.8,372.0 227.4,372.0 227.4,368.5 231.9,368.5 231.9,362.6 236.5,362.6 236.5,372.0 241.1,372.0 241.1,369.2 245.7,369.2 245.7,368.5 250.2,368.5 250.2,357.2 254.8,357.2 254.8,370.9 259.4,370.9 259.4,371.6 264.0,371.6 264.0,371.6 268.5,371.6 268.5,371.6 273.1,371.6 273.1,371.6 277.7,371.6 277.7,371.6 282.3,371.6 282.3,370.8 286.8,370.8 286.8,370.8 291.4,370.8 291.4,372.0 296.0,372.0 296.0,357.2 300.6,357.2 300.6,368.9 305.1,368.9 305.1,368.4 309.7,368.4 309.7,370.8 314.3,370.8 314.3,370.8 318.9,370.8 318.9,364.2 323.4,364.2 323.4,366.1 328.0,366.1 328.0,366.1 332.6,366.1 332.6,369.7 337.2,369.7 337.2,369.2 341.7,369.2 341.7,372.0 346.3,372.0 346.3,368.9 350.9,368.9 350.9,370.8 355.5,370.8 355.5,367.7 360.0,367.7 360.0,372.0 364.6,372.0 364.6,364.2 369.2,364.2 369.2,361.9 373.8,361.9 373.8,367.3 378.3,367.3 378.3,366.1 382.9,366.1 382.9,369.7 387.5,369.7 387.5,372.0 392.1,372.0 392.1,369.7 396.6,369.7 396.6,367.3 401.2,367.3 401.2,369.2 405.8,369.2 405.8,370.3 410.4,370.3 410.4,370.8 414.9,370.8 414.9,348.4 419.5,348.4 419.5,365.4 424.1,365.4 424.1,372.0 428.7,372.0 428.7,368.5 433.2,368.5 433.2,368.5 437.8,368.5 437.8,362.6 442.4,362.6 442.4,367.3 447.0,367.3 447.0,370.9 451.5,370.9 451.5,369.2 456.1,369.2 456.1,372.0 460.7,372.0 460.7,370.9 465.3,370.9 465.3,368.5 469.8,368.5 469.8,366.8 474.4,366.8 474.4,366.1 479.0,366.1 479.0,360.2 480.7,360.2 480.7,375.6" fill="#c9dbc4"/>
<polyline points="198.3,369.7 199.9,369.7 199.9,369.7 204.5,369.7 204.5,370.2 209.1,370.2 209.1,369.2 213.6,369.2 213.6,371.6 218.2,371.6 218.2,370.2 222.8,370.2 222.8,372.0 227.4,372.0 227.4,368.5 231.9,368.5 231.9,362.6 236.5,362.6 236.5,372.0 241.1,372.0 241.1,369.2 245.7,369.2 245.7,368.5 250.2,368.5 250.2,357.2 254.8,357.2 254.8,370.9 259.4,370.9 259.4,371.6 264.0,371.6 264.0,371.6 268.5,371.6 268.5,371.6 273.1,371.6 273.1,371.6 277.7,371.6 277.7,371.6 282.3,371.6 282.3,370.8 286.8,370.8 286.8,370.8 291.4,370.8 291.4,372.0 296.0,372.0 296.0,357.2 300.6,357.2 300.6,368.9 305.1,368.9 305.1,368.4 309.7,368.4 309.7,370.8 314.3,370.8 314.3,370.8 318.9,370.8 318.9,364.2 323.4,364.2 323.4,366.1 328.0,366.1 328.0,366.1 332.6,366.1 332.6,369.7 337.2,369.7 337.2,369.2 341.7,369.2 341.7,372.0 346.3,372.0 346.3,368.9 350.9,368.9 350.9,370.8 355.5,370.8 355.5,367.7 360.0,367.7 360.0,372.0 364.6,372.0 364.6,364.2 369.2,364.2 369.2,361.9 373.8,361.9 373.8,367.3 378.3,367.3 378.3,366.1 382.9,366.1 382.9,369.7 387.5,369.7 387.5,372.0 392.1,372.0 392.1,369.7 396.6,369.7 396.6,367.3 401.2,367.3 401.2,369.2 405.8,369.2 405.8,370.3 410.4,370.3 410.4,370.8 414.9,370.8 414.9,348.4 419.5,348.4 419.5,365.4 424.1,365.4 424.1,372.0 428.7,372.0 428.7,368.5 433.2,368.5 433.2,368.5 437.8,368.5 437.8,362.6 442.4,362.6 442.4,367.3 447.0,367.3 447.0,370.9 451.5,370.9 451.5,369.2 456.1,369.2 456.1,372.0 460.7,372.0 460.7,370.9 465.3,370.9 465.3,368.5 469.8,368.5 469.8,366.8 474.4,366.8 474.4,366.1 479.0,366.1 479.0,360.2 480.7,360.2" fill="none" stroke="#e9a64e" stroke-width="0.9"/>
<circle cx="565.0" cy="316.25" r="44.9" fill="none" stroke="#d5d4d3" stroke-width="3.4"/>
<path d="M565.0,271.35 A44.9,44.9 0 1 1 540.94,354.16" fill="none" stroke="#1683f0" stroke-width="3.4" stroke-linecap="round"/>
<circle cx="565.0" cy="316.25" r="38.05" fill="none" stroke="#d5d4d3" stroke-width="3.4"/>
<path d="M565.0,278.2 A38.05,38.05 0 0 1 602.81,311.96" fill="none" stroke="#2fd58e" stroke-width="3.4" stroke-linecap="round"/>
<circle cx="565.0" cy="316.25" r="31.25" fill="none" stroke="#d5d4d3" stroke-width="3.4"/>
<path d="M565.0,285.0 A31.25,31.25 0 0 1 593.83,304.20" fill="none" stroke="#f5a540" stroke-width="3.4" stroke-linecap="round"/>
</svg><div class="t" style="left:203.20px;top:236px;font-size:8.5px;color:#303030;font-weight:400;">latency</div>
<div class="t" style="left:203.45px;top:246px;font-size:7.1px;color:#333;font-weight:400;">3.7ms</div>
<div class="t" style="left:503.93px;top:235px;font-size:8.4px;color:#303030;font-weight:400;transform:scaleX(1.0282);transform-origin:0 0;">Distribution</div>
<div class="t" style="left:503.49px;top:245px;font-size:7.2px;color:#333;font-weight:400;transform:scaleX(1.0154);transform-origin:0 0;">requests total</div>
<svg class="abs" style="left:0;top:0" width="800" height="200"><path d="M672,165.2 V169.8 M670.2,168 L672,169.9 L673.8,168" fill="none" stroke="#ef5b5b" stroke-width="0.9"/></svg><div class="t" style="left:653.07px;top:125px;font-size:8.6px;color:#777;font-weight:400;transform:scaleX(0.9674);transform-origin:0 0;">Page views</div>
<div class="t" style="left:653.24px;top:142px;font-size:14.4px;color:#1a68e0;font-weight:700;transform:scaleX(1.1256);transform-origin:0 0;">20802</div>
<div class="t" style="left:653.35px;top:164px;font-size:7.6px;color:#7a7a7a;font-weight:400;transform:scaleX(0.9825);transform-origin:0 0;">61%     from previous month</div>
<div class="abs" style="left:644.6px;top:185.5px;width:114.8px;height:1px;background:#dcdbda"></div><div class="abs" style="left:644.6px;top:265.1px;width:114.8px;height:1px;background:#dcdbda"></div><div class="abs" style="left:644.6px;top:320.0px;width:114.8px;height:1px;background:#dcdbda"></div><div class="t" style="left:653.60px;top:198px;font-size:8.4px;color:#777;font-weight:400;">Web requests</div>
<div class="t" style="left:653.34px;top:213px;font-size:8.6px;color:#7a7a7a;font-weight:400;transform:scaleX(1.0286);transform-origin:0 0;">Total</div>
<div class="t" style="left:715.40px;top:213px;font-size:8.6px;color:#4a4a4a;font-weight:400;">70016</div>
<div class="t" style="left:653.09px;top:228px;font-size:8.6px;color:#7a7a7a;font-weight:400;transform:scaleX(1.0123);transform-origin:0 0;">Successful</div>
<div class="t" style="left:715.64px;top:228px;font-size:8.6px;color:#4a4a4a;font-weight:400;transform:scaleX(1.0269);transform-origin:0 0;">94%</div>
<div class="t" style="left:652.87px;top:243px;font-size:8.6px;color:#7a7a7a;font-weight:400;transform:scaleX(0.9729);transform-origin:0 0;">Failures</div>
<div class="t" style="left:715.39px;top:243px;font-size:8.6px;color:#4a4a4a;font-weight:400;transform:scaleX(1.0298);transform-origin:0 0;">6%</div>
<div class="t" style="left:653.27px;top:277px;font-size:9.0px;color:#777;font-weight:400;transform:scaleX(0.9333);transform-origin:0 0;">Tasks done</div>
<div class="t" style="left:653.02px;top:298px;font-size:7.8px;color:#7a7a7a;font-weight:400;transform:scaleX(0.9658);transform-origin:0 0;">No tasks remaining</div>
<div class="t" style="left:652.78px;top:331px;font-size:9.0px;color:#777;font-weight:400;transform:scaleX(0.9594);transform-origin:0 0;">My tasks</div>
<div class="abs" style="left:653.5px;top:352.9px;width:106px;height:17.8px;background:#f7f7f7;border-radius:2px 0 0 2px"></div><div class="t" style="left:659.92px;top:359px;font-size:7.9px;color:#9a9a9a;font-weight:400;transform:scaleX(1.0395);transform-origin:0 0;">I need to ...</div>
<div class="t" style="left:184.02px;top:408px;font-size:11.3px;color:#3c3c3c;font-weight:400;transform:scaleX(0.9759);transform-origin:0 0;">Latest updates</div>
<div class="abs" style="left:185px;top:431.2px;width:284.7px;height:90px;background:#f8f8f8;border-radius:4px"></div><div class="abs" style="left:185px;top:457.8px;width:284.7px;height:1px;background:#ebebeb"></div><div class="abs" style="left:185px;top:485.8px;width:284.7px;height:1px;background:#ebebeb"></div><div class="t" style="left:193.75px;top:441px;font-size:7.8px;color:#555;font-weight:400;transform:scaleX(0.9836);transform-origin:0 0;">2025-04-07 19:15</div>
<div class="t" style="left:283.02px;top:441px;font-size:7.9px;color:#555;font-weight:400;transform:scaleX(0.9631);transform-origin:0 0;">miikli updated <u>Theme</u></div>
<div class="t" style="left:398.01px;top:441px;font-size:7.9px;color:#555;font-weight:400;transform:scaleX(0.9802);transform-origin:0 0;">(repeated 2 times)</div>
<div class="t" style="left:193.75px;top:469px;font-size:7.8px;color:#555;font-weight:400;transform:scaleX(0.9836);transform-origin:0 0;">2025-04-07 19:10</div>
<div class="t" style="left:283.02px;top:469px;font-size:7.9px;color:#555;font-weight:400;transform:scaleX(0.9631);transform-origin:0 0;">miikli updated <u>Theme</u></div>
<div class="t" style="left:398.01px;top:469px;font-size:7.9px;color:#555;font-weight:400;transform:scaleX(0.9802);transform-origin:0 0;">(repeated 2 times)</div>
<div class="t" style="left:193.75px;top:497px;font-size:7.8px;color:#555;font-weight:400;transform:scaleX(0.9836);transform-origin:0 0;">2025-04-07 15:20</div>
<div class="t" style="left:283.02px;top:497px;font-size:7.9px;color:#555;font-weight:400;transform:scaleX(0.9609);transform-origin:0 0;">miikli exported <u>Theme</u></div>
<div class="hl"></div></div></body></html>
